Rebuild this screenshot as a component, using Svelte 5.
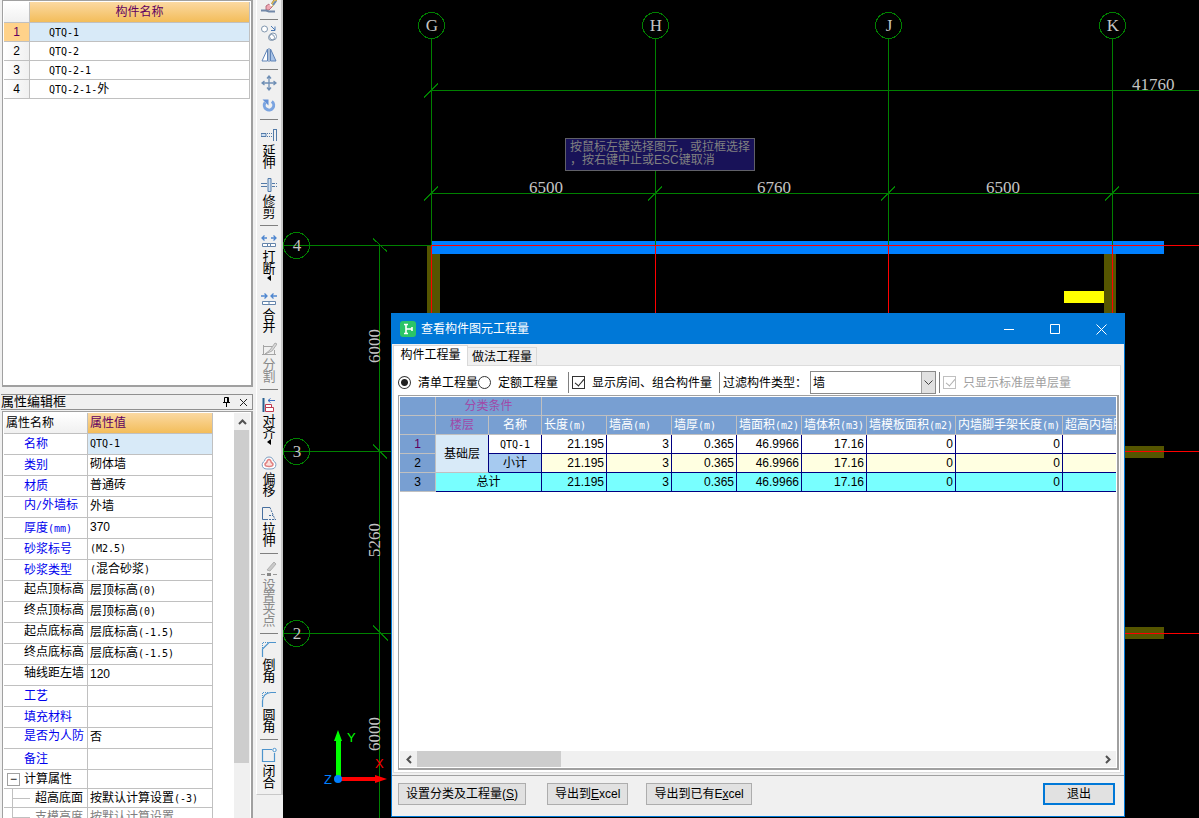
<script>
  const components = ['QTQ-1', 'QTQ-2', 'QTQ-2-1', 'QTQ-2-1-外'];

  const properties = [
    { name: '名称', value: 'QTQ-1', blue: true, active: true },
    { name: '类别', value: '砌体墙', blue: true },
    { name: '材质', value: '普通砖', blue: true },
    { name: '内/外墙标', value: '外墙', blue: true, high: true },
    { name: '厚度(mm)', value: '370', blue: true },
    { name: '砂浆标号', value: '(M2.5)', blue: true },
    { name: '砂浆类型', value: '(混合砂浆)', blue: true },
    { name: '起点顶标高', value: '层顶标高(0)', high: true },
    { name: '终点顶标高', value: '层顶标高(0)', high: true },
    { name: '起点底标高', value: '层底标高(-1.5)', high: true },
    { name: '终点底标高', value: '层底标高(-1.5)', high: true },
    { name: '轴线距左墙', value: '120', high: true },
    { name: '工艺', value: '', blue: true },
    { name: '填充材料', value: '', blue: true },
    { name: '是否为人防', value: '否', blue: true, high: true },
    { name: '备注', value: '', blue: true }
  ];

  const toolGroups = [
    [{ icon: 'brush' }],
    [{ icon: 'copy' }, { icon: 'mirror' }],
    [{ icon: 'move' }, { icon: 'rotate' }],
    [{ icon: 'extend', label: '延伸' }, { icon: 'trim', label: '修剪' }],
    [
      { icon: 'break', label: '打断', more: true },
      { icon: 'merge', label: '合并' },
      { icon: 'split', label: '分割', off: true }
    ],
    [
      { icon: 'align', label: '对齐', more: true },
      { icon: 'offset', label: '偏移' },
      { icon: 'stretch', label: '拉伸' }
    ],
    [{ icon: 'grip', label: '设置夹点', off: true }],
    [{ icon: 'chamfer', label: '倒角' }, { icon: 'fillet', label: '圆角' }],
    [{ icon: 'close', label: '闭合' }]
  ];

  const icons = {
    brush: '<path d="M9 9l5-8 2 2-5 7z" fill="#e8c45c" stroke="#b08a30" stroke-width=".8"/><path d="M5 9l3-2 3 3-3 3-3 0z" fill="#f0a8b4" stroke="#a85868" stroke-width=".8"/><path d="M9 7l2 2" stroke="#fff" stroke-width="2"/><path d="M0 13.5h5l3 1h6" stroke="#7288a8" stroke-width="2" fill="none"/><path d="M12 8l3-4" stroke="#6c8cb8" stroke-width="2"/>',
    copy: '<circle cx="3.5" cy="4" r="3" stroke="#8095ad" fill="#fff"/><circle cx="12" cy="11.5" r="3.5" stroke="#8095ad" fill="#fff"/><circle cx="10.500" cy="12.500" r="3" stroke="#8095ad" fill="none"/><path d="M10 1l4 4M14 1.500v4h-4" stroke="#4a78b4" fill="none"/>',
    mirror: '<path d="M6.500 2v12H1z" stroke="#5f83b6" fill="#fff"/><path d="M9.500 2v12H15z" stroke="#5f83b6" fill="#a9c4e8"/><path d="M8 1v14" stroke="#5f83b6"/>',
    move: '<path d="M8 1v14M1 8h14M6 3.500L8 1l2 2.500M6 12.500L8 15l2-2.500M3.500 6L1 8l2.500 2M12.500 6L15 8l-2.500 2" stroke="#6f8fb5" fill="none" stroke-width="1.300"/>',
    rotate: '<path d="M4.200 5.500A4.700 4.700 0 1 0 10.800 4.500" stroke="#7ba4e0" stroke-width="3" fill="none"/><path d="M1.500 2.500h6v6z" fill="#6390d6"/>',
    extend: '<path d="M0 6.500h5v3H0z" stroke="#527aa8" fill="#cfe0f2"/><path d="M6 6.500h5M6 9.500h5" stroke="#527aa8" stroke-dasharray="1 1"/><path d="M12.500 2v12M15.500 2v12M12 2.500h4" stroke="#527aa8" fill="none"/>',
    trim: '<path d="M0 6.500h6M0 9.500h6" stroke="#527aa8"/><path d="M7 1.500h3v13H7z" stroke="#527aa8" fill="#cfe0f2"/><path d="M11 6.500h5M11 9.500h5" stroke="#527aa8" stroke-dasharray="3 1"/>',
    break: '<path d="M6 5H1M3.500 2.500L1 5l2.500 2.500M10 5h5M12.500 2.500L15 5l-2.500 2.500" stroke="#4f86cf" fill="none" stroke-width="1.300"/><path d="M1.500 10.500h5v3h-5zM9.500 10.500h5v3h-5zM6.500 10.500h3v3h-3z" stroke="#6484ab" fill="#fff"/>',
    merge: '<path d="M0 5h6M3.500 2.500L6 5 3.500 7.500M16 5h-6M12.500 2.500L10 5l2.500 2.500" stroke="#4f86cf" fill="none" stroke-width="1.300"/><path d="M1.500 10.500h13v3h-13zM8 10.500v3" stroke="#6484ab" fill="#fff"/>',
    split: '<path d="M2 5.500h9M2.500 4v10M1 13.500h14M13.500 9v5" stroke="#a5a5a5" fill="none"/><path d="M4 13l5-4 5-7 2 1-5 7z" fill="#d8d8d8" stroke="#a0a0a0" stroke-width=".8"/>',
    align: '<path d="M2.500 1v14" stroke="#286090" stroke-width="2"/><path d="M14 3.500H7M9.500 1.500L7 3.500l2.500 2" stroke="#3a6fc4" fill="none"/><path d="M4.500 7.500h6v3h-6zM4.500 10.500h8v4h-8z" stroke="#c03a50" fill="#fff"/>',
    offset: '<path d="M8 2c3 0 4 2 4.500 4 2 1 3 3 2 5.500S11 14 8 14s-5.500 0-6.500-2.500.5-4.500 2-5.500C4 4 5 2 8 2z" stroke="#7c9cc0" fill="#fff"/><path d="M8 4.500c1.500 0 2 1.500 2.300 3 1.500.7 2 1.500 1.500 2.800S10 11.500 8 11.500s-3.300 0-3.800-1.200 0-2.100 1.500-2.800C6 6 6.500 4.500 8 4.500z" stroke="#e08080" fill="#fbe0dc" stroke-width="1.500"/>',
    stretch: '<path d="M9 2.500H1.500v12H7" stroke="#476f9f" fill="none"/><path d="M9 2.500l5 12M8 14.500h7M8 10.500h4" stroke="#476f9f" fill="none" stroke-dasharray="2 1"/>',
    grip: '<path d="M6 9l7-8 2 2-6 7z" fill="#c9c9c9" stroke="#b0b0b0"/><path d="M0 13.500h16" stroke="#999" stroke-dasharray="4 2"/><path d="M6 12h4v3H6z" fill="#888"/>',
    chamfer: '<path d="M1.500 16V8L8 1.500h7" stroke="#4e94cc" fill="none" stroke-width="1.200"/><path d="M1.500 7V1.500H7" stroke="#4e94cc" fill="none" stroke-dasharray="1 1"/>',
    fillet: '<path d="M1.500 16V10Q2 2 10 1.500h5" stroke="#4e94cc" fill="none" stroke-width="1.200"/><path d="M1.500 7V1.500H7" stroke="#4e94cc" fill="none" stroke-dasharray="1 1"/>',
    close: '<path d="M11 2.500H1.500v12h12V6" stroke="#4e94cc" fill="none" stroke-width="1.200"/><circle cx="13.500" cy="3" r="1.700" stroke="#4e94cc" fill="#fff"/>'
  };

  const quantityHeads = ['长度(m)', '墙高(m)', '墙厚(m)', '墙面积(m2)', '墙体积(m3)', '墙模板面积(m2)', '内墙脚手架长度(m)', '超高内墙脚手架长度(m)'];
  const quantities = ['21.195', '3', '0.365', '46.9966', '17.16', '0', '0', '0'];
  const columnWidths = [36, 53, 53, 65, 65, 65, 65, 65, 89, 107, 131];

  const bubbles = [
    { x: 431, y: 25, t: 'G' }, { x: 655, y: 25, t: 'H' }, { x: 888, y: 25, t: 'J' }, { x: 1112, y: 25, t: 'K' },
    { x: 296, y: 245, t: '4' }, { x: 296, y: 451, t: '3' }, { x: 296, y: 633, t: '2' }
  ];
  const runs = (s) => s.match(/[\x20-\x7e]+|[^\x20-\x7e]+/g) ?? [];
  const isNumber = (s) => /^[\d.]+$/.test(s);
  let mode = $state('bill');
  let rooms = $state(true);
</script>

{#snippet mixed(text)}{#if isNumber(text)}{text}{:else}{#each runs(text) as run}{#if /[\x20-\x7e]/.test(run)}<span class="half">{run}</span>{:else}{run}{/if}{/each}{/if}{/snippet}

<div class="app">
  <aside class="side">
    <section class="components">
      <table class="grid">
        <colgroup><col class="c-index" /><col /></colgroup>
        <thead><tr><th class="corner"></th><th class="gold">构件名称</th></tr></thead>
        <tbody>
          {#each components as name, i}
            <tr class:active={i === 0}>
              <th class="index">{i + 1}</th>
              <td>{@render mixed(name)}</td>
            </tr>
          {/each}
        </tbody>
      </table>
    </section>

    <header class="dock-title">
      <h2>属性编辑框</h2>
      <button aria-label="固定"><svg width="9" height="10"><path d="M2.500 5V.5h4V5M1 5.500h7M4.500 6v4M5.500 1v4" stroke="#000" fill="none" /></svg></button>
      <button aria-label="关闭"><svg width="9" height="9"><path d="M1 1l7 7M8 1l-7 7" stroke="#222" fill="none" /></svg></button>
    </header>

    <section class="props">
      <table class="grid">
        <colgroup><col class="c-name" /><col /></colgroup>
        <thead><tr><th class="corner">属性名称</th><th class="gold">属性值</th></tr></thead>
        <tbody>
          {#each properties as p}
            <tr class:active={p.active}>
              <th class="name" class:blue={p.blue} class:high={p.high}>{@render mixed(p.name)}</th>
              <td>{@render mixed(p.value)}</td>
            </tr>
          {/each}
          <tr class="branch">
            <th><div class="node"><button class="fold" aria-label="折叠">−</button>计算属性</div></th>
            <td></td>
          </tr>
          <tr class="branch leaf"><th>超高底面</th><td>{@render mixed('按默认计算设置(-3)')}</td></tr>
          <tr class="branch leaf dim"><th>支模高度</th><td>按默认计算设置</td></tr>
        </tbody>
      </table>
      <div class="vscroll">
        <button aria-label="向上"><svg width="9" height="6"><path d="M1 5l3.500-3.500L8 5" stroke="#505050" stroke-width="2" fill="none" /></svg></button>
        <div class="thumb"></div>
      </div>
    </section>
  </aside>

  <nav class="toolstrip">
    <div class="tools">
      {#each toolGroups as group}
        <div class="group">
          {#each group as tool}
            <button class="tool" class:labelled={tool.label} disabled={tool.off} aria-label={tool.label ?? tool.icon}>
              <svg width="16" height="16" fill="none">{@html icons[tool.icon]}</svg>
              {#if tool.label}<span>{tool.label}</span>{/if}
              {#if tool.more}<svg class="more" width="4" height="8"><path d="M4 0v6L0 3z" fill="#000" /></svg>{/if}
            </button>
          {/each}
        </div>
      {/each}
    </div>
  </nav>

  <main class="canvas">
    <svg class="drawing" shape-rendering="crispEdges">
      <g transform="translate(-283 0)">
        <rect x="427" y="246" width="13" height="90" fill="#555500" />
        <rect x="1104" y="254" width="12" height="90" fill="#555500" />
        <rect x="1100" y="446" width="64" height="12" fill="#555500" />
        <rect x="1100" y="627" width="64" height="12" fill="#555500" />
        <rect x="1064" y="291" width="40" height="12" fill="#ffff00" />
        <rect x="432" y="241" width="732" height="13" fill="#0080ff" />
        <g stroke="#008000" fill="none">
          {#each [431, 655, 888, 1112] as x}
            <path d="M{x + 0.5} 38V245M{x - 7} 200.500l14-14" />
          {/each}
          <path d="M431 90.500H3000M431 193.500H3000M424 97.500l14-14" />
          <path d="M283 245.500H431M283 451.500H431M283 633.500H431M379.500 245V3000" />
          <path d="M373 238.500l14 13M373 444.500l14 14M373 625.500l15 15" />
          {#each bubbles as b}<circle cx={b.x + 0.5} cy={b.y + 0.5} r="13" />{/each}
        </g>
        <g stroke="#ff0000">
          <path d="M431 245.500H3000M1100 451.500H3000M1100 633.500H3000" />
          {#each [431, 655, 888, 1112] as x}<path d="M{x + 0.5} 245V340" />{/each}
        </g>
        <g class="cad-text">
          {#each bubbles as b}<text x={b.x + 1} y={b.y + 6} text-anchor="middle">{b.t}</text>{/each}
          <text x="529" y="193">6500</text>
          <text x="757" y="193">6760</text>
          <text x="986" y="193">6500</text>
          <text x="1132" y="90">41760</text>
          <text transform="translate(380 363) rotate(-90)">6000</text>
          <text transform="translate(380 557) rotate(-90)">5260</text>
          <text transform="translate(380 751) rotate(-90)">6000</text>
        </g>
        <g class="axes" shape-rendering="auto">
          <path d="M336 779V741h-2l4-11 4 11h-1v38z" fill="#00ff00" />
          <path d="M338 777h37v-2l12 4-12 4v-2H338z" fill="#ff0000" />
          <circle cx="338" cy="779" r="4" fill="#0080ff" />
          <text x="347" y="742" fill="#00ff00">Y</text>
          <text x="375" y="768" fill="#ff0000">X</text>
          <text x="324" y="784" fill="#0080ff">Z</text>
        </g>
      </g>
    </svg>

    <p class="hint">按鼠标左键选择图元，或拉框选择<br />，按右键中止或ESC键取消</p>

    <section class="dialog">
      <header class="titlebar">
        <svg width="16" height="16"><rect width="16" height="16" rx="3" fill="#2bc467" /><path d="M4 3.500h4M6 3.500v9M4 12.500h4M6 8h6M12 6v4" stroke="#fff" stroke-width="1.600" fill="none" /></svg>
        <h1>查看构件图元工程量</h1>
        <button aria-label="最小化"><svg width="11" height="11"><path d="M0 5.500h10" stroke="#fff" /></svg></button>
        <button aria-label="最大化"><svg width="11" height="11"><path d="M.5.5h9v9h-9z" stroke="#fff" fill="none" /></svg></button>
        <button aria-label="关闭"><svg width="11" height="11"><path d="M.5.5l10 10M10.500.5l-10 10" stroke="#fff" /></svg></button>
      </header>

      <div class="tabs">
        <button class="tab current">构件工程量</button>
        <button class="tab">做法工程量</button>
      </div>

      <div class="page">
        <div class="options">
          <label class="opt bill"><input type="radio" value="bill" bind:group={mode} />清单工程量</label>
          <label class="opt quota"><input type="radio" value="quota" bind:group={mode} />定额工程量</label>
          <i class="bar"></i>
          <label class="opt rooms"><input type="checkbox" bind:checked={rooms} />显示房间、组合构件量</label>
          <i class="bar"></i>
          <label class="filter" for="kind">过滤构件类型：</label>
          <span class="combo">
            <select id="kind"><option>墙</option></select>
            <svg width="13" height="21"><rect width="13" height="21" fill="#e1e1e1" /><path d="M2.500 8.500l4 4 4-4" stroke="#444" fill="none" /></svg>
          </span>
          <i class="bar"></i>
          <label class="opt off"><input type="checkbox" checked disabled />只显示标准层单层量</label>
        </div>

        <div class="sheet">
          <div class="viewport">
            <table class="quantity">
              <colgroup>{#each columnWidths as w}<col style="width: {w}px" />{/each}</colgroup>
              <thead>
                <tr><th></th><th colspan="2" class="group-head">分类条件</th><th colspan="8"></th></tr>
                <tr>
                  <th></th><th class="group-head">楼层</th><th>名称</th>
                  {#each quantityHeads as h}<th class="measure">{@render mixed(h)}</th>{/each}
                </tr>
              </thead>
              <tbody>
                <tr>
                  <th class="chosen">1</th><td rowspan="2" class="floor">基础层</td><td class="label">{@render mixed('QTQ-1')}</td>
                  {#each quantities as q}<td>{q}</td>{/each}
                </tr>
                <tr class="subtotal">
                  <th>2</th><td class="label">小计</td>
                  {#each quantities as q}<td>{q}</td>{/each}
                </tr>
                <tr class="total">
                  <th>3</th><td colspan="2" class="label">总计</td>
                  {#each quantities as q}<td>{q}</td>{/each}
                </tr>
              </tbody>
            </table>
          </div>
          <div class="hscroll">
            <button aria-label="向左"><svg width="6" height="9"><path d="M5 1L1.500 4.500 5 8" stroke="#505050" stroke-width="2" fill="none" /></svg></button>
            <div class="thumb"></div>
            <button aria-label="向右"><svg width="6" height="9"><path d="M1 1l3.500 3.500L1 8" stroke="#505050" stroke-width="2" fill="none" /></svg></button>
          </div>
        </div>
      </div>

      <footer class="actions">
        <button class="push first">设置分类及工程量(<u>S</u>)</button>
        <button class="push">导出到<u>E</u>xcel</button>
        <button class="push">导出到已有E<u>x</u>cel</button>
        <button class="push exit">退出</button>
      </footer>
    </section>
  </main>
</div>

<style>
  :global(body) { margin: 0; }
  .app, .app * { box-sizing: border-box; }
  .app {
    display: flex;
    height: 100vh;
    overflow: hidden;
    background: #f0f0f0;
    color: #000;
    font: 12px/16px "Liberation Sans", "Noto Sans CJK SC", sans-serif;
  }
  .half { font-family: "DejaVu Sans Mono", monospace; font-size: 10px; line-height: 10px; }
  button {
    padding: 0;
    border: 0;
    background: none;
    color: inherit;
    font: inherit;
    display: flex;
    align-items: center;
    justify-content: center;
  }
  h1, h2, p { margin: 0; font-weight: normal; }
  svg { flex: none; display: block; }
  table { border-collapse: separate; border-spacing: 0; table-layout: fixed; }
  th, td { padding: 0; font-weight: normal; white-space: nowrap; overflow: hidden; }

  .side { width: 256px; flex: none; display: flex; flex-direction: column; padding-right: 3px; }
  .components {
    height: 387px;
    flex: none;
    margin-left: 2px;
    padding: 1px 1px 0 1px;
    background: #fff;
    border: 1px solid #a0a0a0;
    border-width: 1px 2px 2px 1px;
  }
  .grid { width: 100%; }
  .grid th, .grid td { border: 1px solid #c0c0c0; border-width: 0 1px 1px 0; height: 19px; line-height: 18px; text-align: left; }
  .components .grid thead th { height: 21px; line-height: 20px; text-align: center; }
  .c-index { width: 26px; }
  .c-name { width: 84px; }
  .grid .corner { background: linear-gradient(#fff, #f0f0f0); }
  .grid .gold { background: linear-gradient(#fbd9a2, #f3bd5a); color: #600060; }
  .components .grid .index { background: linear-gradient(90deg, #fff, #f0f0f0); text-align: center; }
  .components .grid .active .index { background: #ffd28a; color: #600060; }
  .components .grid td { padding-left: 19px; }
  .grid .active td { background: #d8eaf8; }

  .dock-title {
    height: 16px;
    flex: none;
    margin: 7px 0 1px 1px;
    display: flex;
    align-items: center;
    gap: 8px;
    padding-right: 4px;
    border: 1px solid #909090;
    border-left: 0;
  }
  .dock-title h2 { flex: 1; font-size: 13px; line-height: 14px; }

  .props {
    flex: 1;
    min-height: 0;
    overflow: hidden;
    display: flex;
    justify-content: space-between;
    margin-left: 2px;
    padding: 1px 1px 0 1px;
    background: #fff;
    border: 1px solid #a0a0a0;
    border-width: 1px 2px 0 1px;
  }
  .props .grid { width: 209px; align-self: flex-start; }
  .props .grid th, .props .grid td { height: 21px; line-height: 20px; padding-left: 2px; }
  .props .grid td { padding-bottom: 2px; line-height: 18px; }
  .props .grid .name { padding-left: 20px; }
  .props .grid .high { line-height: 16px; padding-bottom: 4px; }
  .props .grid .blue { color: #0000ee; }
  .props .grid .branch th, .props .grid .branch td { height: 19px; line-height: 18px; padding-bottom: 0; }
  .node { display: flex; align-items: center; height: 18px; }
  .fold {
    flex: none;
    width: 13px;
    height: 13px;
    margin: 0 4px 0 1px;
    border: 1px solid #a0a0a0;
    background: #fff;
    line-height: 11px;
  }
  .props .grid .leaf th { padding-left: 8px; }
  .leaf th::before {
    content: "";
    display: inline-block;
    width: 17px;
    height: 18px;
    margin-right: 5px;
    vertical-align: top;
    background: linear-gradient(#c0c0c0, #c0c0c0) 0 9px / 17px 1px no-repeat;
    border-left: 1px solid #c0c0c0;
  }
  .dim { color: #808080; }
  .vscroll { width: 16px; background: #f0f0f0; display: flex; flex-direction: column; }
  .vscroll button { height: 17px; flex: none; }
  .vscroll .thumb { height: 333px; flex: none; margin-right: 1px; background: #cdcdcd; }

  .toolstrip { width: 27px; flex: none; }
  .tools {
    margin-top: -6px;
    padding-bottom: 2px;
    border: 1px solid #c8c8c8;
    border-width: 0 2px 1px 1px;
    border-left-color: #fff;
  }
  .group + .group::before { content: ""; display: block; height: 1px; margin: 3px 3px 2px; background: #808080; }
  .tool { flex-direction: column; justify-content: flex-start; width: 100%; padding: 3px 0; }
  .tool.labelled { padding-top: 5px; }
  .tool span { width: 13px; margin-top: 2px; font-size: 13px; line-height: 12px; word-break: break-all; white-space: normal; }
  .tool:disabled { color: #8a8a8a; }
  .more { margin-right: 1px; }

  .canvas { position: relative; flex: 1; min-width: 0; background: #000; overflow: hidden; }
  .drawing { position: absolute; inset: 0; width: 100%; height: 100%; }
  .cad-text { fill: #c4c4c4; font: 17px "Liberation Serif", serif; }
  .axes { font: 13px "Liberation Sans", sans-serif; }
  .hint {
    position: absolute;
    left: 282px;
    top: 138px;
    padding: 2px 4px 3px;
    border: 1px solid #606068;
    background: #181258;
    color: #808080;
    line-height: 13px;
    white-space: nowrap;
  }

  .dialog {
    position: absolute;
    left: 108px;
    right: 74px;
    top: 313px;
    bottom: 1px;
    display: flex;
    flex-direction: column;
    border: 1px solid #0078d7;
    background: #f0f0f0;
  }
  .titlebar { display: flex; align-items: center; height: 30px; flex: none; padding-left: 8px; background: #0078d7; color: #fff; }
  .titlebar h1 { flex: 1; margin-left: 5px; font-size: 12px; line-height: 16px; }
  .titlebar button { width: 46px; height: 29px; }

  .tabs { display: flex; align-items: flex-end; height: 21px; flex: none; padding-left: 1px; }
  .tab { width: 69px; height: 18px; border: 1px solid #d9d9d9; border-bottom: 0; border-left: 0; }
  .tab.current { width: 75px; height: 21px; margin-bottom: -1px; z-index: 1; border-left: 1px solid #d9d9d9; background: #fff; padding-bottom: 2px; }

  .page {
    flex: 1;
    min-height: 0;
    display: flex;
    flex-direction: column;
    margin: 0 3px 2px 1px;
    padding: 4px 1px 2px 4px;
    background: #fff;
    border: 1px solid #dcdcdc;
  }
  .options { display: flex; align-items: center; height: 25px; flex: none; white-space: nowrap; }
  .opt { display: flex; align-items: center; gap: 7px; }
  .opt.bill { width: 80px; }
  .opt.quota { margin-right: 10px; }
  .opt.rooms { margin-right: 7px; }
  .opt input { appearance: none; width: 13px; height: 13px; margin: 0; border: 1px solid #333; background: #fff; }
  .opt [type="radio"] { border-radius: 50%; }
  .opt [type="radio"]:checked { background: radial-gradient(circle, #222 3px, #fff 4px); }
  .opt [type="checkbox"]:checked::after {
    content: "";
    display: block;
    width: 4px;
    height: 8px;
    margin: 0 0 0 4px;
    border: solid #222;
    border-width: 0 1px 1px 0;
    transform: rotate(40deg);
  }
  .opt.off { color: #a0a0a0; }
  .opt.off input { border-color: #c0c0c0; }
  .opt.off [type="checkbox"]:checked::after { border-color: #b0b0b0; }
  .bar { width: 1px; height: 21px; margin-right: 3px; background: #808080; }
  .filter { width: 87px; }
  .combo { position: relative; width: 126px; margin-right: 3px; }
  .combo select {
    appearance: none;
    display: block;
    width: 100%;
    height: 23px;
    padding: 0 2px;
    border: 1px solid #8a8a8a;
    border-radius: 0;
    background: #fff;
    color: #000;
    font: inherit;
  }
  .combo svg { position: absolute; right: 1px; top: 1px; border-left: 1px solid #a0a0a0; box-sizing: content-box; }

  .sheet {
    flex: 1;
    min-height: 0;
    display: flex;
    flex-direction: column;
    padding: 1px;
    border: 1px solid #a0a0a0;
    border-width: 1px 2px 2px 1px;
  }
  .viewport { flex: 1; min-height: 0; overflow: hidden; }
  .quantity { width: 794px; }
  .quantity th { height: 19px; line-height: 18px; background: #789fd2; color: #fff; border: 1px solid #c0c0c0; border-width: 0 1px 1px 0; }
  .quantity .group-head { color: #a04aa8; }
  .quantity .measure { text-align: left; padding-left: 2px; }
  .quantity tbody th { color: #000; }
  .quantity tbody .chosen { color: #600060; }
  .quantity td { height: 19px; line-height: 18px; padding-right: 2px; text-align: right; border: 1px solid #000080; border-width: 0 1px 1px 0; }
  .quantity .label, .quantity .floor { text-align: center; padding: 0; }
  .quantity .floor { background: #d8eaf8; border-color: #c0c0c0 #000080; }
  .quantity .subtotal td { background: #ffffe1; }
  .quantity .subtotal .label { background: #a6caf0; }
  .quantity .total td { background: #78ffff; }
  .hscroll { display: flex; height: 16px; flex: none; background: #f0f0f0; }
  .hscroll button { width: 17px; }
  .hscroll .thumb { width: 144px; margin-right: auto; background: #cdcdcd; }

  .actions { display: flex; height: 41px; flex: none; padding: 7px 9px 0 6px; border-top: 1px solid #a0a0a0; }
  .push { height: 22px; padding: 0 7px; margin-right: 18px; border: 1px solid #adadad; background: #e1e1e1; white-space: nowrap; }
  .push.first { margin-right: 21px; }
  .push.exit { width: 72px; margin: 0 0 0 auto; border: 2px solid #0078d7; }
</style>
